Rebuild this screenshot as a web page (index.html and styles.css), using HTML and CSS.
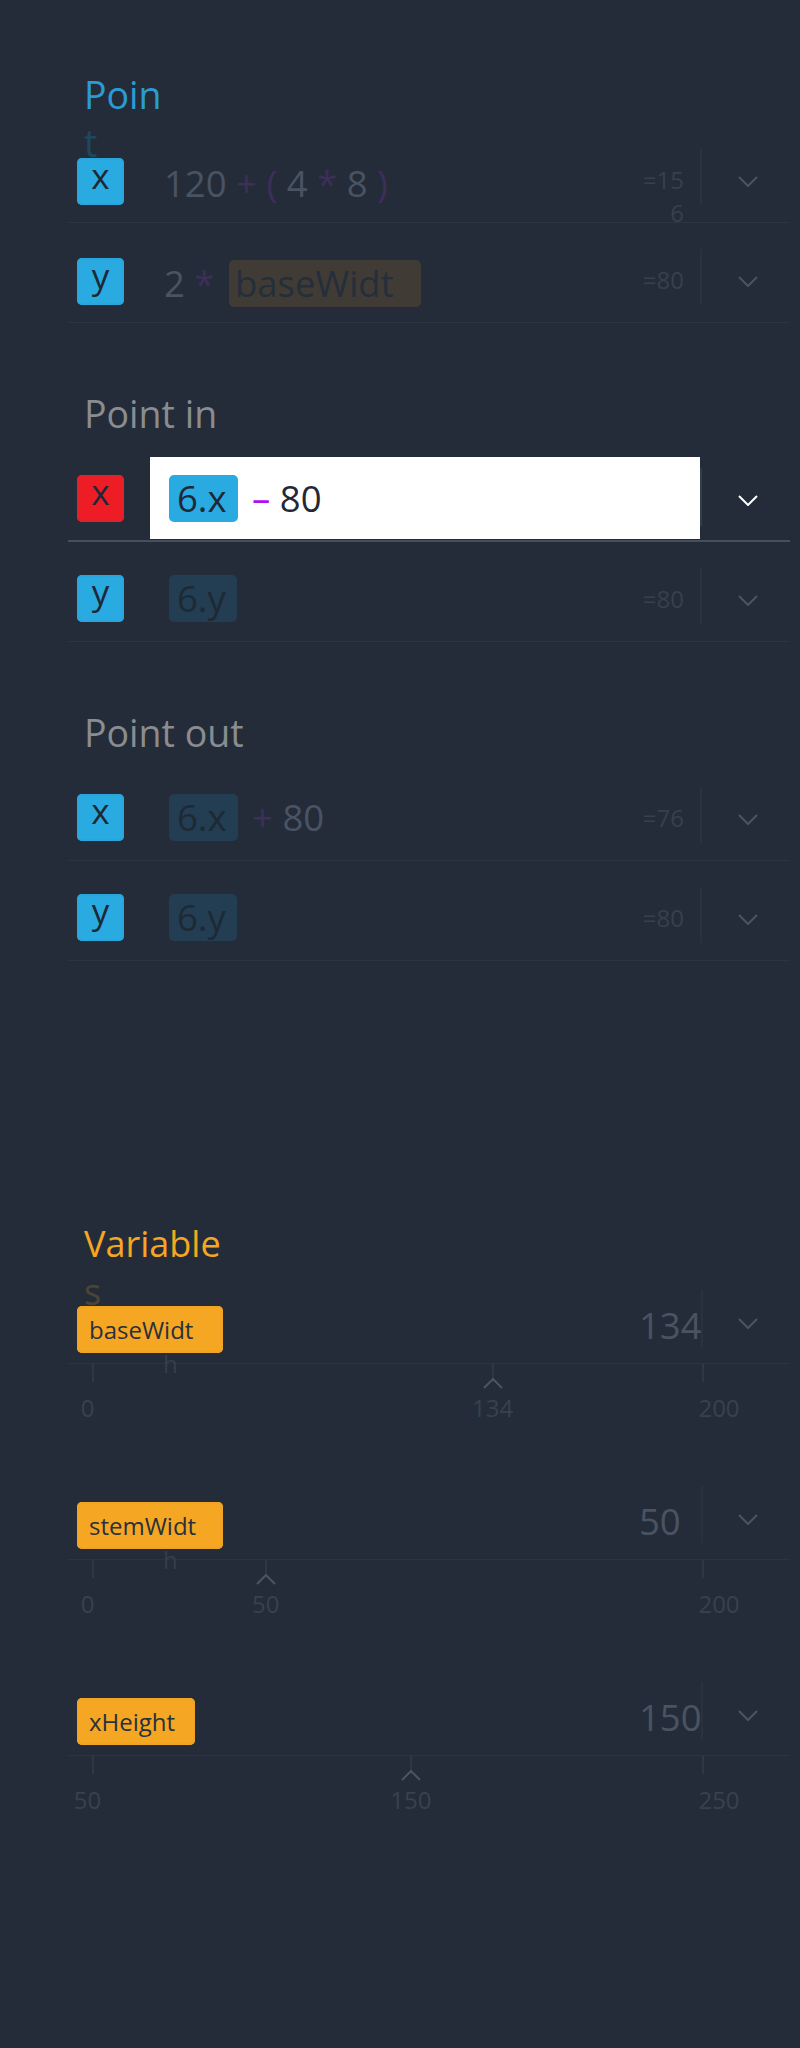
FILE: index.html
```html
<!DOCTYPE html>
<html lang="en">
<head>
<meta charset="utf-8">
<title>Point editor</title>
<link rel="stylesheet" href="styles.css">
</head>
<body>
<main class="panel">

  <section class="group group-point">
    <h2 class="title title-blue">Poin<span class="spill spill-blue">t</span></h2>
    <div class="row">
      <span class="badge badge-blue">x</span>
      <div class="expr">
        <span class="tokens"><span class="num">120</span> <span class="op">+</span> <span class="op">(</span> <span class="num">4</span> <span class="op">*</span> <span class="num">8</span> <span class="op">)</span></span>
        <span class="result">=156</span>
      </div>
      <span class="sep"></span>
      <span class="menu"><svg width="20" height="11" viewBox="0 0 20 11"><polyline points="1,1 10,10 19,1" fill="none" stroke="currentColor" stroke-width="2"/></svg></span>
    </div>
    <div class="row">
      <span class="badge badge-blue">y</span>
      <div class="expr">
        <span class="tokens"><span class="num">2</span> <span class="op">*</span> <span class="chip chip-var">baseWidt</span></span>
        <span class="result">=80</span>
      </div>
      <span class="sep"></span>
      <span class="menu"><svg width="20" height="11" viewBox="0 0 20 11"><polyline points="1,1 10,10 19,1" fill="none" stroke="currentColor" stroke-width="2"/></svg></span>
    </div>
  </section>

  <section class="group">
    <h2 class="title title-gray">Point in</h2>
    <div class="row active">
      <span class="badge badge-red">x</span>
      <div class="expr">
        <span class="tokens"><span class="chip chip-blue">6.x</span> <span class="op">–</span> <span class="num">80</span></span>
      </div>
      <span class="sep"></span>
      <span class="menu"><svg width="20" height="11" viewBox="0 0 20 11"><polyline points="1,1 10,10 19,1" fill="none" stroke="currentColor" stroke-width="2"/></svg></span>
    </div>
    <div class="row">
      <span class="badge badge-blue">y</span>
      <div class="expr">
        <span class="tokens"><span class="chip chip-dim">6.y</span></span>
        <span class="result">=80</span>
      </div>
      <span class="sep"></span>
      <span class="menu"><svg width="20" height="11" viewBox="0 0 20 11"><polyline points="1,1 10,10 19,1" fill="none" stroke="currentColor" stroke-width="2"/></svg></span>
    </div>
  </section>

  <section class="group">
    <h2 class="title title-gray">Point out</h2>
    <div class="row">
      <span class="badge badge-blue">x</span>
      <div class="expr">
        <span class="tokens"><span class="chip chip-dim">6.x</span> <span class="op">+</span> <span class="num">80</span></span>
        <span class="result">=76</span>
      </div>
      <span class="sep"></span>
      <span class="menu"><svg width="20" height="11" viewBox="0 0 20 11"><polyline points="1,1 10,10 19,1" fill="none" stroke="currentColor" stroke-width="2"/></svg></span>
    </div>
    <div class="row">
      <span class="badge badge-blue">y</span>
      <div class="expr">
        <span class="tokens"><span class="chip chip-dim">6.y</span></span>
        <span class="result">=80</span>
      </div>
      <span class="sep"></span>
      <span class="menu"><svg width="20" height="11" viewBox="0 0 20 11"><polyline points="1,1 10,10 19,1" fill="none" stroke="currentColor" stroke-width="2"/></svg></span>
    </div>
  </section>

  <section class="group vars">
    <h2 class="title title-orange">Variable<span class="spill spill-orange">s</span></h2>

    <div class="var-row">
      <div class="var-head">
        <span class="vbadge clip">baseWidt<span class="vspill">h</span></span>
        <span class="vvalue">134</span>
        <span class="vsep"></span>
        <span class="vmenu"><svg width="20" height="11" viewBox="0 0 20 11"><polyline points="1,1 10,10 19,1" fill="none" stroke="currentColor" stroke-width="2"/></svg></span>
      </div>
      <div class="slider">
        <span class="tick" style="left:0%"></span>
        <span class="tick" style="left:65.6%"></span>
        <span class="tick" style="left:100%"></span>
        <svg class="caret" style="left:65.6%" width="20" height="11" viewBox="0 0 20 11"><polyline points="1,10 10,1 19,10" fill="none" stroke="currentColor" stroke-width="2"/></svg>
        <span class="slabel min">0</span>
        <span class="slabel" style="left:65.6%">134</span>
        <span class="slabel max">200</span>
      </div>
    </div>

    <div class="var-row">
      <div class="var-head">
        <span class="vbadge clip">stemWidt<span class="vspill">h</span></span>
        <span class="vvalue">50</span>
        <span class="vsep"></span>
        <span class="vmenu"><svg width="20" height="11" viewBox="0 0 20 11"><polyline points="1,1 10,10 19,1" fill="none" stroke="currentColor" stroke-width="2"/></svg></span>
      </div>
      <div class="slider">
        <span class="tick" style="left:0%"></span>
        <span class="tick" style="left:28.4%"></span>
        <span class="tick" style="left:100%"></span>
        <svg class="caret" style="left:28.4%" width="20" height="11" viewBox="0 0 20 11"><polyline points="1,10 10,1 19,10" fill="none" stroke="currentColor" stroke-width="2"/></svg>
        <span class="slabel min">0</span>
        <span class="slabel" style="left:28.4%">50</span>
        <span class="slabel max">200</span>
      </div>
    </div>

    <div class="var-row">
      <div class="var-head">
        <span class="vbadge">xHeight</span>
        <span class="vvalue">150</span>
        <span class="vsep"></span>
        <span class="vmenu"><svg width="20" height="11" viewBox="0 0 20 11"><polyline points="1,1 10,10 19,1" fill="none" stroke="currentColor" stroke-width="2"/></svg></span>
      </div>
      <div class="slider">
        <span class="tick" style="left:0%"></span>
        <span class="tick" style="left:52.2%"></span>
        <span class="tick" style="left:100%"></span>
        <svg class="caret" style="left:52.2%" width="20" height="11" viewBox="0 0 20 11"><polyline points="1,10 10,1 19,10" fill="none" stroke="currentColor" stroke-width="2"/></svg>
        <span class="slabel min">50</span>
        <span class="slabel" style="left:52.2%">150</span>
        <span class="slabel max">250</span>
      </div>
    </div>
  </section>

</main>
</body>
</html>
```

FILE: styles.css
```css
* {
  box-sizing: border-box;
}

html {
  background: #242c39;
}

body {
  margin: 0;
  min-height: 2048px;
  background: #242c39;
  font-family: "Open Sans", "Noto Sans", sans-serif;
}

.panel {
  width: 722px;
  margin-left: 68px;
  padding-top: 71px;
}

.group + .group {
  margin-top: 67px;
}

.group.vars {
  margin-top: 259px;
}

/* titles */
.title {
  margin: 0 0 4px;
  height: 48px;
  padding-left: 16px;
  font-size: 37.5px;
  line-height: 48px;
  font-weight: 400;
  white-space: nowrap;
}

.vars .title {
  margin-bottom: 22px;
  font-size: 36px;
}

.title-blue { color: #2b9bd4; }
.title-gray { color: #898c90; }
.title-orange { color: #f5a623; }

.spill {
  display: block;
}

.spill-blue { color: #1f4760; }
.spill-orange { color: #4d4434; }

/* point rows */
.row {
  display: flex;
  align-items: center;
  height: 100px;
  padding: 15px 0 2px 9px;
  border-bottom: 1px solid #2b3441;
}

.row.active {
  padding-bottom: 1px;
  border-bottom: 2px solid #474f5c;
}

.badge {
  flex: none;
  display: flex;
  align-items: center;
  justify-content: center;
  width: 47px;
  height: 47px;
  padding-bottom: 12px;
  border-radius: 5px;
  font-size: 35px;
  line-height: 48px;
  color: #1f2835;
}

.group-point .badge {
  margin-top: 5px;
}

.badge-blue {
  background: #29abe2;
  box-shadow: inset 0 0 0 2px #2aa6dc;
}

.badge-red {
  background: #ee1c25;
  box-shadow: inset 0 0 0 2px #e2222b;
}

.expr {
  flex: 1;
  display: flex;
  align-items: center;
  height: 82px;
  margin-left: 26px;
  padding: 0 16px 0 14px;
}

.row.active .expr {
  background: #ffffff;
}

.tokens {
  white-space: nowrap;
  font-size: 36.5px;
  line-height: 48px;
}

.group-point .tokens {
  padding-top: 8px;
}

.num { color: #4a5362; }
.op { color: #3d2e5a; }

.row.active .num { color: #1f2937; }
.row.active .op { color: #b20cf3; }

.chip {
  display: inline-block;
  height: 47px;
  margin: 0 5px;
  padding: 0 11px 0 8px;
  border-radius: 5px;
  line-height: 47px;
}

.chip-blue {
  background: #29abe2;
  color: #1f2835;
}

.chip-dim {
  background: #233d52;
  color: #1e2936;
}

.chip-var {
  width: 192px;
  padding-left: 6px;
  background: #403c35;
  color: #252e3b;
}

.result {
  margin-left: auto;
  width: 44px;
  height: 33px;
  font-size: 24px;
  line-height: 33px;
  text-align: right;
  word-break: break-all;
  color: #37404c;
}

.sep {
  flex: none;
  width: 2px;
  height: 56px;
  margin-bottom: 5px;
  background: #29323e;
}

.row.active .sep {
  height: 58px;
  margin-bottom: 3px;
  background: #343d4a;
}

.menu {
  flex: none;
  display: flex;
  justify-content: center;
  width: 88px;
  margin-top: 4px;
  padding-left: 3px;
  color: #4b5463;
}

.row.active .menu {
  color: #ffffff;
}

.menu svg,
.vmenu svg {
  display: block;
}

/* variables */
.var-row {
  height: 196px;
}

.var-head {
  display: flex;
  align-items: flex-start;
  height: 74px;
  padding-left: 9px;
  border-bottom: 1px solid #2b3441;
}

.vbadge {
  position: relative;
  flex: none;
  display: flex;
  align-items: center;
  height: 47px;
  margin-top: 16px;
  padding: 0 20px 0 12px;
  border-radius: 5px;
  background: #f5a623;
  box-shadow: inset 0 0 0 2px #f0a425;
  color: #28313d;
  font-size: 24px;
  line-height: 33px;
  white-space: nowrap;
}

.vbadge.clip {
  width: 146px;
}

.vspill {
  position: absolute;
  left: 86px;
  top: 41px;
  color: #353e4b;
}

.vvalue {
  flex: none;
  width: 62px;
  margin-left: auto;
  margin-top: 11px;
  font-size: 36.5px;
  line-height: 48px;
  color: #4a5362;
  white-space: nowrap;
}

.vsep {
  flex: none;
  width: 2px;
  height: 57px;
  background: #29323e;
}

.vmenu {
  flex: none;
  display: flex;
  justify-content: center;
  width: 87px;
  margin-top: 28px;
  padding-left: 2px;
  color: #4b5463;
}

.slider {
  position: relative;
  width: 610px;
  height: 122px;
  margin-left: 24.5px;
}

.tick {
  position: absolute;
  top: 0;
  width: 2px;
  height: 18px;
  margin-left: -1px;
  background: #2e3744;
}

.caret {
  position: absolute;
  top: 14px;
  display: block;
  transform: translateX(-50%);
  color: #4b5463;
}

.slabel {
  position: absolute;
  top: 27px;
  font-size: 24px;
  line-height: 33px;
  color: #38414e;
  white-space: nowrap;
  transform: translateX(-50%);
}

.slabel.min {
  left: -5px;
}

.slabel.max {
  left: calc(100% + 16.5px);
}
```
